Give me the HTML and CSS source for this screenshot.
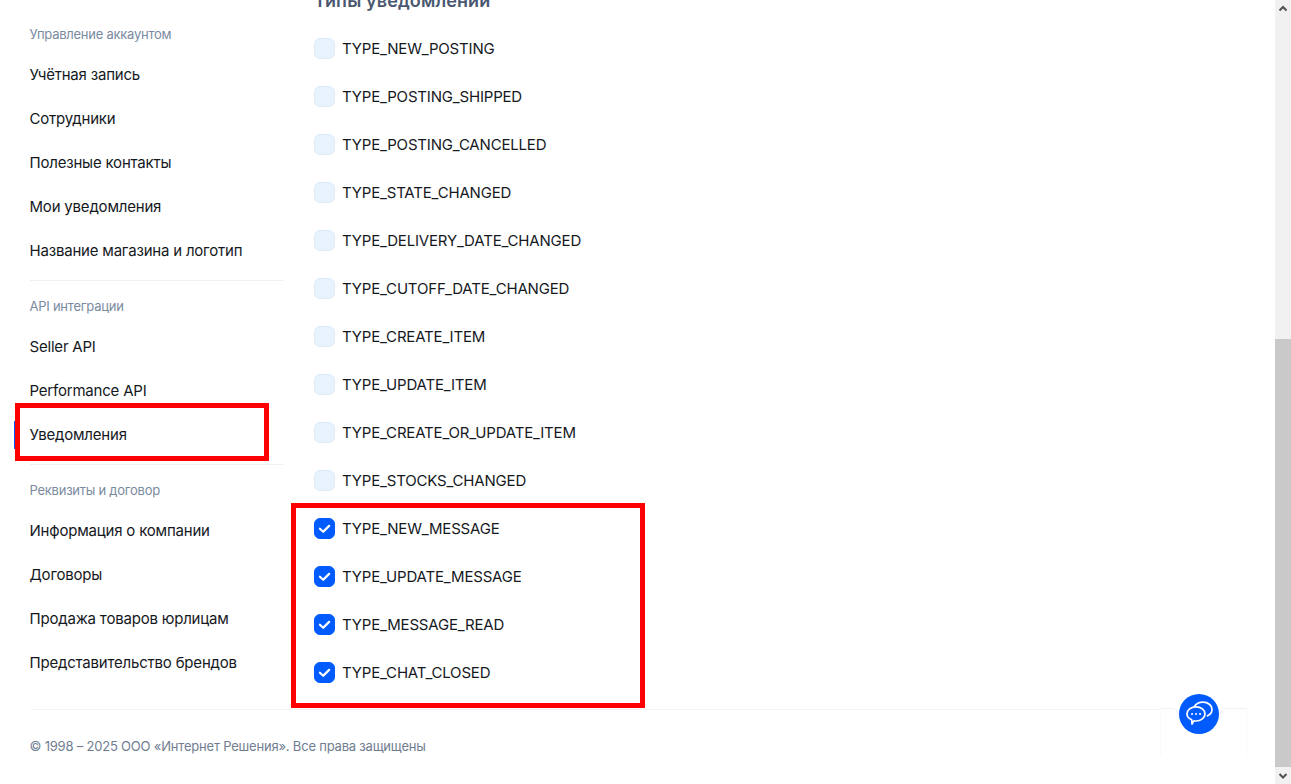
FILE: index.html
```html
<!DOCTYPE html>
<html lang="ru">
<head>
<meta charset="utf-8">
<title>Уведомления</title>
<link rel="stylesheet" href="styles.css">
</head>
<body>
<div class="page">
  <div class="content">
    <div class="columns">
      <nav class="sidebar">
        <section class="group">
          <div class="group-title">Управление аккаунтом</div>
          <a class="nav-item">Учётная запись</a>
          <a class="nav-item">Сотрудники</a>
          <a class="nav-item">Полезные контакты</a>
          <a class="nav-item">Мои уведомления</a>
          <a class="nav-item">Название магазина и логотип</a>
        </section>
        <section class="group">
          <div class="group-title">API интеграции</div>
          <a class="nav-item">Seller API</a>
          <a class="nav-item">Performance API</a>
          <a class="nav-item active">Уведомления</a>
        </section>
        <section class="group">
          <div class="group-title">Реквизиты и договор</div>
          <a class="nav-item">Информация о компании</a>
          <a class="nav-item">Договоры</a>
          <a class="nav-item">Продажа товаров юрлицам</a>
          <a class="nav-item">Представительство брендов</a>
        </section>
      </nav>
      <main class="main">
        <h2 class="heading">Типы уведомлений</h2>
        <ul class="types">
          <li class="type"><span class="box"></span>TYPE_NEW_POSTING</li>
          <li class="type"><span class="box"></span>TYPE_POSTING_SHIPPED</li>
          <li class="type"><span class="box"></span>TYPE_POSTING_CANCELLED</li>
          <li class="type"><span class="box"></span>TYPE_STATE_CHANGED</li>
          <li class="type"><span class="box"></span>TYPE_DELIVERY_DATE_CHANGED</li>
          <li class="type"><span class="box"></span>TYPE_CUTOFF_DATE_CHANGED</li>
          <li class="type"><span class="box"></span>TYPE_CREATE_ITEM</li>
          <li class="type"><span class="box"></span>TYPE_UPDATE_ITEM</li>
          <li class="type"><span class="box"></span>TYPE_CREATE_OR_UPDATE_ITEM</li>
          <li class="type"><span class="box"></span>TYPE_STOCKS_CHANGED</li>
          <li class="type"><span class="box on"><svg class="tick" viewBox="0 0 12 12"><path d="M2.3 6.200 5 8.600 9.700 3.900"/></svg></span>TYPE_NEW_MESSAGE</li>
          <li class="type"><span class="box on"><svg class="tick" viewBox="0 0 12 12"><path d="M2.3 6.200 5 8.600 9.700 3.900"/></svg></span>TYPE_UPDATE_MESSAGE</li>
          <li class="type"><span class="box on"><svg class="tick" viewBox="0 0 12 12"><path d="M2.3 6.200 5 8.600 9.700 3.900"/></svg></span>TYPE_MESSAGE_READ</li>
          <li class="type"><span class="box on"><svg class="tick" viewBox="0 0 12 12"><path d="M2.3 6.200 5 8.600 9.700 3.900"/></svg></span>TYPE_CHAT_CLOSED</li>
        </ul>
      </main>
    </div>
    <div class="rule"></div>
    <footer class="footer">© 1998 – 2025 ООО «Интернет Решения». Все права защищены</footer>
  </div>
  <div class="scrollbar">
    <div class="arrow"><svg viewBox="0 0 16 16"><path d="M4.500 10 8 6.500 11.500 10"/></svg></div>
    <div class="track"><div class="thumb"></div></div>
    <div class="arrow"><svg viewBox="0 0 16 16"><path d="M4.500 6.500 8 10 11.500 6.500"/></svg></div>
  </div>
</div>
<div class="mark mark-nav"></div>
<div class="mark mark-types"></div>
<svg class="notch" viewBox="0 0 88 48"><path d="M0 .5H12C16 .5 17.500 3 18 6.500A21.500 21.500 0 0 0 60 6.500C60.500 3 62 .5 66 .5H87"/><path d="M.5 0V48M86.500 0V48" class="side"/></svg>
<button class="chat" type="button">
  <svg viewBox="0 0 40 40"><path d="M15.500 12.500C17 9.800 20.200 8.200 24 8.200c5 0 9 3.100 9 7 0 2.900-1.600 5.300-4.500 6.600"/><path d="M17 12.800c5 0 9 3.200 9 7.100s-4 7.100-9 7.100c-.8 0-1.500-.1-2.200-.2l-1.800 3.200-.3-4.200C10.100 24.600 8 22.400 8 19.900c0-3.900 4-7.100 9-7.100z"/><path class="dots" d="M13 20h.1M17 20h.1M21 20h.1"/></svg>
</button>
</body>
</html>
```
FILE: styles.css
```css
* { box-sizing: border-box; }
html, body { margin: 0; height: 100%; overflow: hidden; background: #fff; }
body { font-family: Inter, "Liberation Sans", sans-serif; color: #15191e; }
.page { display: flex; height: 784px; }
.content { flex: 1; min-width: 0; padding: 0 28px 0 29.5px; overflow: hidden; }
.columns { display: flex; margin-top: -8px; height: 717px; }
.sidebar { width: 254.5px; flex: none; padding-top: 32px; }
.group { border-bottom: 1px solid #eef0f4; padding-bottom: 7px; margin-bottom: 15px; }
.group:last-child { border-bottom: 0; }
.group-title { font-size: 13px; line-height: 20px; color: #7a8aa0; margin-bottom: 9px; letter-spacing: -0.25px; }
.nav-item { display: flex; align-items: center; height: 44px; padding-bottom: 2px; font-size: 15px; color: #15191e; position: relative; letter-spacing: -0.2px; }
.nav-item.active::before { content: ""; position: absolute; left: -16px; top: 8px; width: 4px; height: 28px; background: #005bff; border-radius: 0 4px 4px 0; }
.main { flex: 1; padding-left: 30px; }
.heading { margin: -1px 0 0; font-size: 18px; line-height: 20px; font-weight: 600; color: #4a5870; letter-spacing: 0.12px; }
.types { list-style: none; margin: 13px 0 0; padding: 0; }
.type { display: flex; align-items: center; height: 48px; font-size: 15px; color: #15191e; gap: 7px; letter-spacing: -0.18px; }
.box { width: 21px; height: 21px; border-radius: 6px; background: #e8f3fd; border: 1px solid #deebf7; display: flex; align-items: center; justify-content: center; flex: none; }
.box.on { background: #005bff; border-color: #005bff; }
.tick { width: 15px; height: 15px; fill: none; stroke: #fff; stroke-width: 1.8; stroke-linecap: round; stroke-linejoin: round; }
.rule { height: 1px; margin-right: 87px; background: #f3f4f6; }
.footer { padding-top: 27px; font-size: 13px; line-height: 18px; color: #6f7d90; letter-spacing: -0.2px; }
.scrollbar { width: 16px; flex: none; display: flex; flex-direction: column; background: #f1f1f1; }
.arrow { height: 17px; flex: none; }
.arrow svg { display: block; width: 16px; height: 17px; fill: none; stroke: #505050; stroke-width: 2; }
.track { flex: 1; display: flex; flex-direction: column; justify-content: flex-end; }
.thumb { height: 428px; background: #c9c9c9; }
.mark { position: absolute; border: 5px solid #ff0000; }
.mark-nav { left: 15px; top: 403px; width: 254px; height: 58px; }
.mark-types { left: 291px; top: 503px; width: 354px; height: 205px; }
.notch { position: absolute; left: 1160px; top: 708px; width: 88px; height: 48px; fill: none; stroke: #eff2f8; stroke-width: 1; }
.notch .side { stroke: #f8f9fb; }
.chat { position: absolute; left: 1179px; top: 694px; width: 40px; height: 40px; border: 0; padding: 0; border-radius: 50%; background: #005bff; }
.chat svg { display: block; width: 40px; height: 40px; fill: none; stroke: #fff; stroke-width: 1.7; stroke-linecap: round; stroke-linejoin: round; }
.chat .dots { stroke-width: 1.9; }
```
